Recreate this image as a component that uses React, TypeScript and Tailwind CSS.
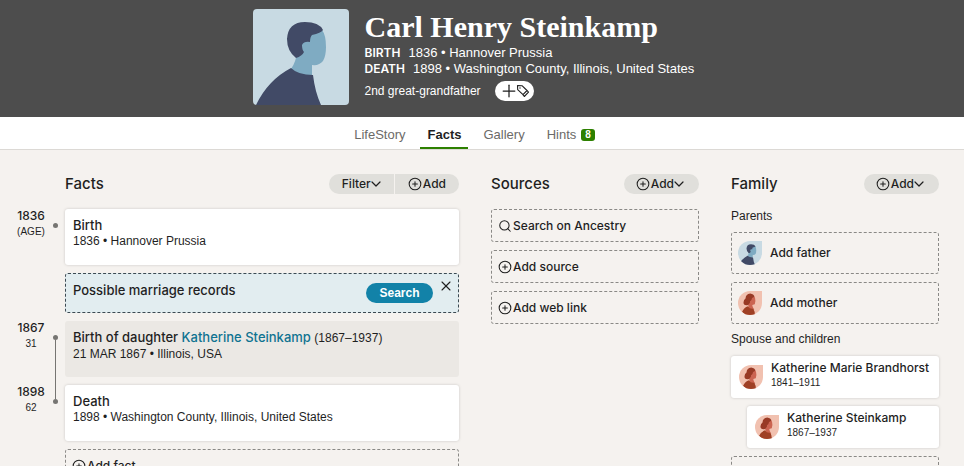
import { ChevronDown, CirclePlus, Plus, Search, X } from "lucide-react";
import type { ReactNode } from "react";

interface Fact {
  year: string;
  age: string;
  title: string;
  detail: string;
  relative?: { name: string; lifespan: string };
  linkAbove?: boolean;
  linkBelow?: boolean;
}

const BIRTH: Fact = { year: "1836", age: "(AGE)", title: "Birth", detail: "1836 • Hannover Prussia" };

const LATER_FACTS: Fact[] = [
  {
    year: "1867",
    age: "31",
    title: "Birth of daughter",
    detail: "21 MAR 1867 • Illinois, USA",
    relative: { name: "Katherine Steinkamp", lifespan: "(1867–1937)" },
    linkBelow: true,
  },
  {
    year: "1898",
    age: "62",
    title: "Death",
    detail: "1898 • Washington County, Illinois, United States",
    linkAbove: true,
  },
];

function MalePortrait({ className }: { className: string }) {
  return (
    <svg viewBox="0 0 96 96" className={className} aria-hidden="true">
      <rect width="96" height="96" fill="#c8dae3" />
      <path
        d="M44 43 Q43 53 38 60 Q48 69 59 66 L59 56 Q66 57 70 52 Q73 47 73 38 Q73 26 69 21 L56 24 L48 35 Z"
        fill="#7fabc2"
      />
      <path
        d="M70 21 Q68 24 59 26 Q57 28 57 33 Q51 32 49 36 Q49 41 51 43 Q49 47 43 49 Q34 42 34 30 Q35 13 52 13 Q66 13 70 21Z"
        fill="#414a66"
      />
      <path d="M3 96 Q15 71 38 59 Q45 66 60 66 Q62 83 68 96 Z" fill="#414a66" />
    </svg>
  );
}

function FemalePortrait({ className }: { className: string }) {
  return (
    <svg viewBox="0 0 96 96" className={className} aria-hidden="true">
      <rect width="96" height="96" fill="#f1c1b0" />
      <path d="M47 24 Q62 18 68 26 Q72 42 67 53 L57 56 Q58 66 65 75 L44 73 L41 57 Z" fill="#cb6451" />
      <path
        d="M66 22 Q60 27 56 28 Q55 34 52 38 Q46 39 48 46 Q44 57 34 57 Q21 56 22 45 Q23 35 30 30 Q31 12 49 10 Q63 12 66 22Z"
        fill="#983a25"
      />
      <path d="M16 84 Q24 66 40 61 Q46 73 61 71 Q68 81 67 96 L30 96 Z" fill="#9f4025" />
    </svg>
  );
}

function TagIcon() {
  return (
    <svg viewBox="0 0 14 14" className="size-[14px]" fill="none" stroke="currentColor" strokeWidth="1.1" aria-hidden="true">
      <path d="M1.500 1.500 L6 1.700 L11 6.500 L7 10.700 L1.700 5.700 Z" strokeLinejoin="round" />
      <path d="M11 6.500 L12.500 8.200 L8.300 12.500 L7 10.700" strokeLinejoin="round" />
      <circle cx="4" cy="4" r=".7" fill="currentColor" stroke="none" />
    </svg>
  );
}

function SectionHeader({ title, children }: { title: string; children: ReactNode }) {
  return (
    <div className="flex h-5 items-center justify-between font-['Inter',sans-serif] font-medium">
      <h2 className="text-[15px] leading-[18px]">{title}</h2>
      {children}
    </div>
  );
}

function AddMenuButton() {
  return (
    <button className="flex h-5 items-center rounded-full bg-[#e0dfdb] px-3">
      <CirclePlus className="mr-px size-[14px]" strokeWidth={1.8} />
      Add
      <ChevronDown className="-ml-[3px] size-4" strokeWidth={1.8} />
    </button>
  );
}

function DashedAction({ icon, label }: { icon: ReactNode; label: string }) {
  return (
    <button className="flex h-[33px] w-full items-center gap-px rounded-[3px] border border-dashed border-[#8a8986] px-[6px] font-['Inter',sans-serif] font-medium">
      {icon}
      {label}
    </button>
  );
}

function FactRow({ fact }: { fact: Fact }) {
  return (
    <li className="flex">
      <div className="w-7 text-center">
        <div className="font-['Inter',sans-serif] leading-[14px] font-medium">{fact.year}</div>
        <div className="mt-[3px] text-[10px] leading-3">{fact.age}</div>
      </div>
      <div className="flex w-5 flex-col items-center">
        <div className={fact.linkAbove ? "h-[14px] w-px bg-[#767572]" : "h-[14px]"} />
        <div className="size-[5px] rounded-full bg-[#767572]" />
        {fact.linkBelow && <div className="w-px grow bg-[#767572]" />}
      </div>
      <article
        className={
          fact.relative
            ? "mb-2 h-14 grow rounded-[3px] bg-[#ebe8e4] px-2 pt-2"
            : "mb-2 h-14 grow rounded-[3px] bg-white px-2 pt-2 shadow-[0_0_3px_rgba(0,0,0,0.18)]"
        }
      >
        <h3 className="font-['Inter',sans-serif] text-[13px] leading-4 font-medium">
          {fact.title}
          {fact.relative && (
            <>
              {" "}
              <a href="#katherine" className="text-[#0f7391]">{fact.relative.name}</a>{" "}
              <span className="font-['Liberation_Sans',sans-serif] text-xs font-normal">{fact.relative.lifespan}</span>
            </>
          )}
        </h3>
        <p className="leading-4">{fact.detail}</p>
      </article>
    </li>
  );
}

function AddRelative({ label, portrait }: { label: string; portrait: ReactNode }) {
  return (
    <button className="flex h-[42px] w-full items-center gap-2 rounded-[3px] border border-dashed border-[#8a8986] px-[6px] font-['Inter',sans-serif] font-medium">
      {portrait}
      {label}
    </button>
  );
}

function PersonCard({ name, lifespan }: { name: string; lifespan: string }) {
  return (
    <a href="#person" className="flex h-[42px] items-center gap-2 rounded-[3px] bg-white px-2 shadow-[0_0_3px_rgba(0,0,0,0.18)]">
      <FemalePortrait className="size-6 shrink-0 rounded-full rounded-tr-none" />
      <div className="self-start pt-1 whitespace-nowrap">
        <div className="font-['Inter',sans-serif] leading-4 font-medium">{name}</div>
        <div className="text-[10px] leading-[14px]">{lifespan}</div>
      </div>
    </a>
  );
}

export default function App() {
  return (
    <div className="min-h-screen bg-[#f5f2ef] font-['Liberation_Sans',sans-serif] text-xs text-[#1f1f1f]">
      <header className="flex h-[117px] justify-center gap-4 bg-[#4d4d4d] pt-[9px] pr-[15px] text-white">
        <MalePortrait className="size-24 shrink-0 rounded" />
        <div className="w-[332px]">
          <h1 className="font-['Liberation_Serif',serif] text-[30px] leading-9 font-bold whitespace-nowrap">
            Carl Henry Steinkamp
          </h1>
          <p className="text-[13px] leading-4 whitespace-nowrap">
            <span className="mr-2 font-['Inter',sans-serif] text-xs font-semibold">BIRTH</span>1836 • Hannover Prussia
          </p>
          <p className="text-[13px] leading-4 whitespace-nowrap">
            <span className="mr-2 font-['Inter',sans-serif] text-xs font-semibold">DEATH</span>1898 • Washington County, Illinois, United States
          </p>
          <div className="mt-1 flex items-center gap-[14px]">
            <span>2nd great-grandfather</span>
            <button aria-label="Add tag" className="flex h-5 w-[39px] items-center justify-center rounded-full bg-white text-[#1f1f1f]">
              <Plus className="-mr-[3px] size-5" strokeWidth={1.5} />
              <TagIcon />
            </button>
          </div>
        </div>
      </header>

      <nav className="flex h-[33px] justify-center gap-2 border-b border-[#dcd9d5] bg-white pr-[15px] text-[13px] text-[#6b6a68]">
        <a href="#lifestory" className="px-[7px] pt-[9px]">LifeStory</a>
        <a href="#facts" className="border-b-2 border-[#2d8000] px-[7px] pt-[9px] font-bold text-[#1f1f1f]">Facts</a>
        <a href="#gallery" className="px-[7px] pt-[9px]">Gallery</a>
        <a href="#hints" className="flex gap-[5px] px-[7px] pt-[9px]">
          Hints
          <span className="mt-[3px] h-3 rounded-[3px] bg-[#2d8000] px-1 text-[10px] leading-3 font-bold text-white">8</span>
        </a>
      </nav>

      <main className="grid grid-cols-[minmax(0,442fr)_minmax(0,208fr)_minmax(0,208fr)] gap-x-8 pt-6 pr-[25px] pl-[17px]">
        <section>
          <div className="pl-12">
            <SectionHeader title="Facts">
              <div className="flex gap-px">
                <button className="flex h-5 items-center rounded-l-full bg-[#e0dfdb] pr-[10px] pl-[13px]">
                  Filter
                  <ChevronDown className="-ml-[3px] size-4" strokeWidth={1.8} />
                </button>
                <button className="flex h-5 items-center gap-px rounded-r-full bg-[#e0dfdb] px-[13px]">
                  <CirclePlus className="size-[14px]" strokeWidth={1.8} />
                  Add
                </button>
              </div>
            </SectionHeader>
          </div>
          <ul className="mt-[15px]">
            <FactRow fact={BIRTH} />
            <li className="mb-2 ml-12 flex h-10 items-start rounded-[3px] border border-dashed border-[#3c4a52] bg-[#e2edf0] pr-1 pl-[7px]">
              <h3 className="grow pt-2 font-['Inter',sans-serif] text-[13px] leading-4 font-medium">Possible marriage records</h3>
              <button className="mt-[9px] h-5 w-[67px] rounded-full bg-[#1282a8] font-bold text-white">Search</button>
              <button aria-label="Dismiss" className="mt-1 ml-[5px]">
                <X className="size-4" strokeWidth={1.6} />
              </button>
            </li>
            {LATER_FACTS.map((fact) => (
              <FactRow key={fact.year} fact={fact} />
            ))}
            <li className="ml-12">
              <DashedAction icon={<CirclePlus className="size-[14px]" strokeWidth={1.8} />} label="Add fact" />
            </li>
          </ul>
        </section>

        <section>
          <SectionHeader title="Sources">
            <AddMenuButton />
          </SectionHeader>
          <div className="mt-[15px] flex flex-col gap-2">
            <DashedAction icon={<Search className="size-[14px]" strokeWidth={1.8} />} label="Search on Ancestry" />
            <DashedAction icon={<CirclePlus className="size-[14px]" strokeWidth={1.8} />} label="Add source" />
            <DashedAction icon={<CirclePlus className="size-[14px]" strokeWidth={1.8} />} label="Add web link" />
          </div>
        </section>

        <section>
          <SectionHeader title="Family">
            <AddMenuButton />
          </SectionHeader>
          <h3 className="mt-[14px] leading-4">Parents</h3>
          <div className="mt-2 flex flex-col gap-2">
            <AddRelative label="Add father" portrait={<MalePortrait className="size-6 rounded-full rounded-tr-none" />} />
            <AddRelative label="Add mother" portrait={<FemalePortrait className="size-6 rounded-full rounded-tr-none" />} />
          </div>
          <h3 className="mt-[7px] leading-4">Spouse and children</h3>
          <div className="mt-[9px] flex flex-col gap-2">
            <PersonCard name="Katherine Marie Brandhorst" lifespan="1841–1911" />
            <div className="pl-4">
              <PersonCard name="Katherine Steinkamp" lifespan="1867–1937" />
            </div>
            <button aria-label="Add spouse" className="h-[42px] w-full rounded-[3px] border border-dashed border-[#8a8986]" />
          </div>
        </section>
      </main>
    </div>
  );
}
